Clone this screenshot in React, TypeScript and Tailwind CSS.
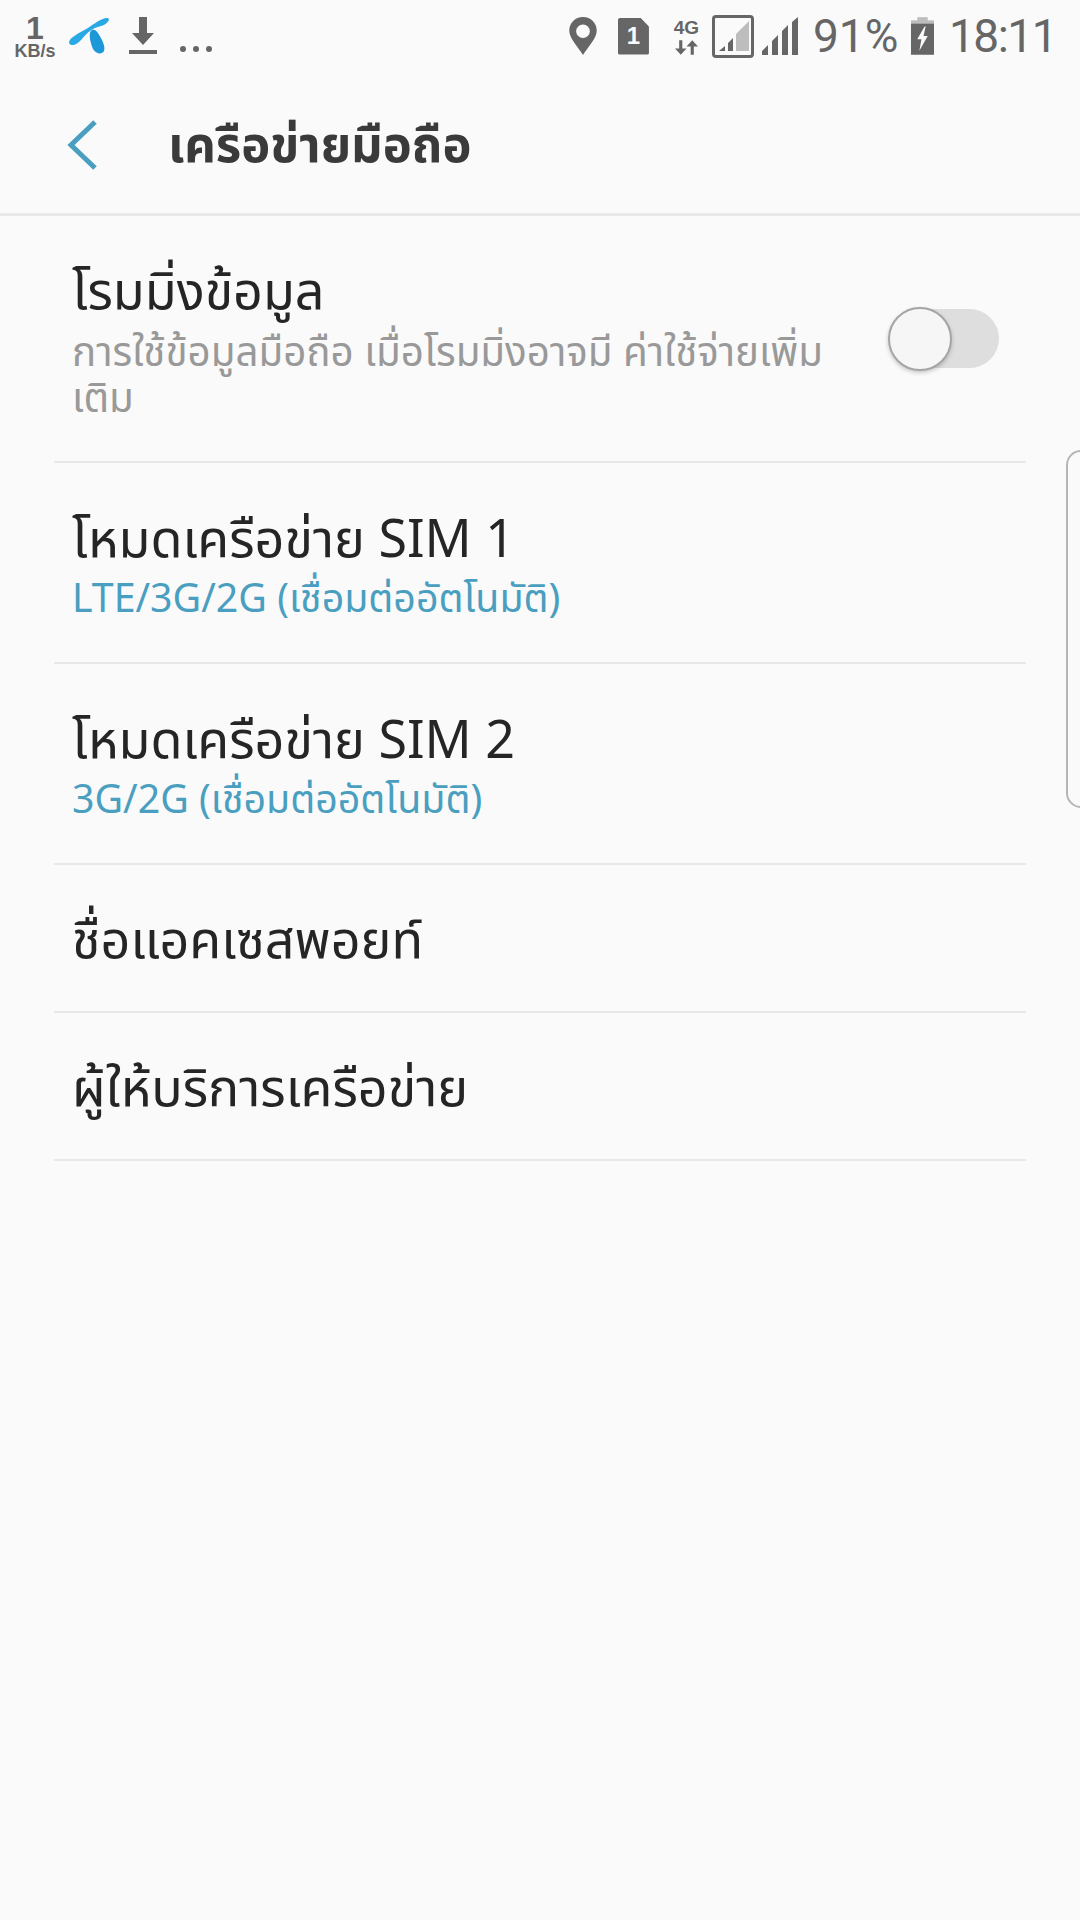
const font = { fontFamily: '"Noto Sans Thai", "Noto Sans", Roboto, "DejaVu Sans", sans-serif' };

function StatusBar() {
  return (
    <div className="flex h-[72px] items-center justify-between pl-[12px] pr-[24px] text-[#666666]">
      <div className="flex items-center">
        <div className="flex w-[46px] flex-col items-center font-['Liberation_Sans',sans-serif] font-bold leading-none">
          <span className="text-[32px] leading-[30px]">1</span>
          <span className="text-[18px] leading-[17px]">KB/s</span>
        </div>
        <svg className="ml-[10px]" width="42" height="38" viewBox="0 0 42 38">
          <path d="M1 26C1 20 12 16 20 11 27 6 35 0 40 1 43 3 38 8 33 9 24 11 19 16 14 22 9 28 3 30 1 26Z" fill="#2aa9e4" />
          <path d="M24 13C20 15 22 25 25 32 28 37 34 38 36 34 38 29 33 21 30 16 28 13 26 12 24 13Z" fill="#1c98d8" />
        </svg>
        <svg className="ml-[19px]" width="28" height="38" viewBox="0 0 28 38">
          <path d="M10 0h8v16h7L14 28 3 16h7z" fill="#666666" />
          <rect x="0" y="33" width="28" height="4" fill="#666666" />
        </svg>
        <div className="ml-[23px] mt-[26px] flex gap-[7px]">
          <span className="h-[6px] w-[6px] rounded-full bg-[#666666]" />
          <span className="h-[6px] w-[6px] rounded-full bg-[#666666]" />
          <span className="h-[6px] w-[6px] rounded-full bg-[#666666]" />
        </div>
      </div>
      <div className="flex items-center">
        <svg width="28" height="38" viewBox="0 0 26 36">
          <path fillRule="evenodd" d="M13 0C5.500 0 0 5.500 0 13c0 7 8 15 13 23 5-8 13-16 13-23C26 5.500 20.500 0 13 0Zm0 7a6.500 6.500 0 1 1 0 13 6.500 6.500 0 0 1 0-13Z" fill="#666666" />
        </svg>
        <div className="ml-[21px] flex h-[37px] w-[31px] items-center justify-center rounded-[2px] bg-[#666666] [clip-path:polygon(0_0,72%_0,100%_24%,100%_100%,0_100%)]">
          <span className="font-['Liberation_Sans',sans-serif] text-[24px] font-bold leading-none text-[#fafafa]">1</span>
        </div>
        <div className="ml-[24px] flex w-[27px] flex-col items-center">
          <span className="font-['Liberation_Sans',sans-serif] text-[19px] font-bold leading-[20px]">4G</span>
          <svg className="mt-[2px]" width="23" height="15" viewBox="0 0 22 14">
            <path d="M4 0h3v8h4l-5.500 6L0 8h4zM15 14h3V6h4l-5.500-6L11 6h4z" fill="#666666" />
          </svg>
        </div>
        <div className="ml-[12px] flex h-[43px] w-[42px] items-center justify-center rounded-[4px] border-[3px] border-[#666666]">
          <svg width="32" height="31" viewBox="0 0 32 31">
            <path d="M32 0v30H19V13z" fill="#bdbdbd" />
            <path d="M16 17v13h-5V22zM8 25v5H2z" fill="#666666" />
          </svg>
        </div>
        <svg className="ml-[8px]" width="36" height="38" viewBox="0 0 36 38">
          <path d="M0 38v-4l6-6v10zM10 38V24l6-6v20zM20 38V14l6-6v30zM30 38V5l6-5v38z" fill="#666666" />
        </svg>
        <span className="ml-[15px] w-[90px] font-['Roboto',sans-serif] text-[46px] leading-none">91%</span>
        <svg className="ml-[8px]" width="23" height="38" viewBox="0 0 22 36">
          <rect x="6" y="0" width="10" height="4" fill="#bdbdbd" />
          <rect x="0" y="3" width="22" height="3" fill="#bdbdbd" />
          <path fillRule="evenodd" d="M0 6h22v30H0zM13 9 6 21h4l-2 11 8-14h-4l2-9z" fill="#666666" />
        </svg>
        <span className="ml-[15px] font-['Roboto',sans-serif] text-[46px] leading-none tracking-[-1.5px]">18:11</span>
      </div>
    </div>
  );
}

function Row({ title, sub, className }: { title: string; sub?: string; className: string }) {
  return (
    <div className={`mx-[54px] flex flex-col justify-center border-b-2 border-[#e8e8e8] px-[18px] ${className}`}>
      <div className="text-[52px] leading-[60px] text-[#252525]">{title}</div>
      {sub && <div className="mt-[4px] text-[39.3px] leading-[50px] text-[#4a9fc0]">{sub}</div>}
    </div>
  );
}

export default function App() {
  return (
    <div className="relative h-[1920px] w-[1080px] overflow-hidden bg-[#fafafa]" style={font}>
      <StatusBar />
      <div className="flex h-[144px] items-center border-b-[3px] border-[#e8e8e8]">
        <svg className="ml-[66px] mt-[4px]" width="32" height="52" viewBox="0 0 32 52" fill="none">
          <path d="M29 3 5 26l24 23" stroke="#4a9fc0" strokeWidth="5" />
        </svg>
        <h1 className="ml-[70px] pt-[10px] text-[49px] font-bold text-[#3a3a3a]">เครือข่ายมือถือ</h1>
      </div>
      <div className="mx-[54px] flex h-[247px] items-center border-b-2 border-[#e8e8e8] pl-[18px] pr-[27px]">
        <div className="pt-[8px]">
          <div className="text-[52px] leading-[60px] text-[#252525]">โรมมิ่งข้อมูล</div>
          <div className="mt-[8px] text-[40.3px] leading-[46px] text-[#999999]">
            การใช้ข้อมูลมือถือ เมื่อโรมมิ่งอาจมี ค่าใช้จ่ายเพิ่ม
            <br />
            เติม
          </div>
        </div>
        <div className="relative ml-auto h-[59px] w-[95px] rounded-full bg-[#dedede]">
          <div className="absolute left-[-16px] top-[-2px] h-[64px] w-[64px] rounded-full border-2 border-[#a5a5a5] bg-[#f6f6f6] shadow-[0_2px_4px_rgba(0,0,0,0.2)]" />
        </div>
      </div>
      <Row className="h-[201px] pt-[10px]" title="โหมดเครือข่าย SIM 1" sub="LTE/3G/2G (เชื่อมต่ออัตโนมัติ)" />
      <Row className="h-[201px] pt-[10px]" title="โหมดเครือข่าย SIM 2" sub="3G/2G (เชื่อมต่ออัตโนมัติ)" />
      <Row className="h-[148px] pt-[7px]" title="ชื่อแอคเซสพอยท์" />
      <Row className="h-[148px] pt-[7px]" title="ผู้ให้บริการเครือข่าย" />
      <div className="absolute left-[1066px] top-[450px] h-[358px] w-[30px] rounded-[20px] border-2 border-[#b5b5b5]" />
    </div>
  );
}
